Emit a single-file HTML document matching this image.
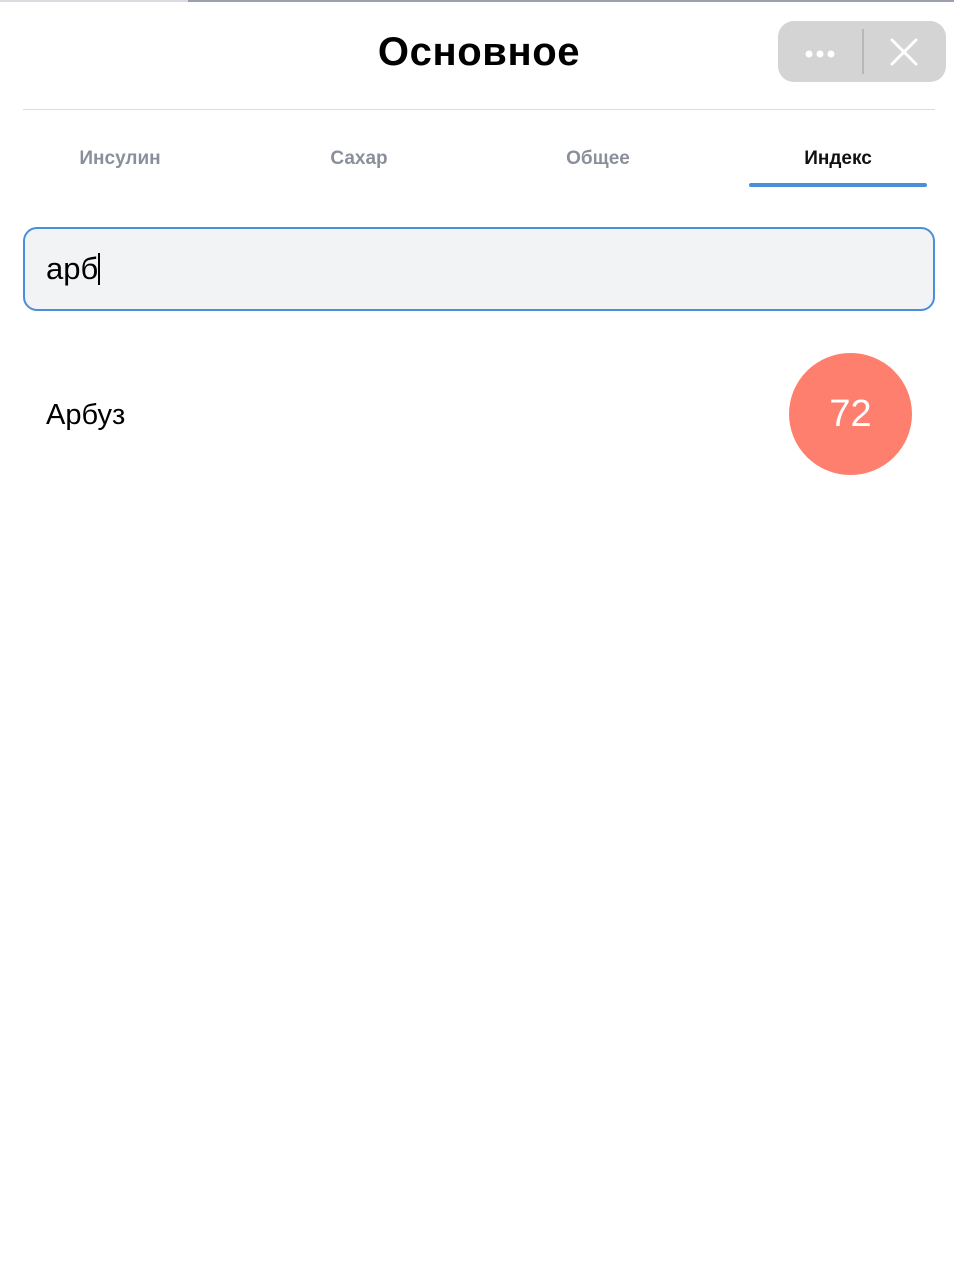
<!DOCTYPE html>
<html><head><meta charset="utf-8"><style>
body{margin:0;width:954px;height:1280px;background:#fff;font-family:"Liberation Sans",sans-serif;position:relative;overflow:hidden}
.a{position:absolute}
</style></head><body>
<div class="a" style="left:0;top:0;width:188px;height:2px;background:#d8dbe0"></div>
<div class="a" style="left:188px;top:0;width:766px;height:2px;background:#9aa0ae"></div>
<div class="a" style="left:0;top:29px;width:958px;text-align:center;font-size:40px;font-weight:bold;color:#000;line-height:46px;letter-spacing:0.6px">Основное</div>
<div class="a" style="left:778px;top:21px;width:168px;height:61px;border-radius:16px;background:#d4d4d4"></div>
<div class="a" style="left:862px;top:29px;width:2px;height:45px;background:#b8b8b8"></div>
<div class="a" style="left:804px;top:46px;width:32px;height:10px">
<svg width="32" height="10"><circle cx="5" cy="5" r="3.5" fill="#fff"/><circle cx="16" cy="5" r="3.5" fill="#fff"/><circle cx="27" cy="5" r="3.5" fill="#fff"/></svg></div>
<svg class="a" style="left:890px;top:38px" width="28" height="28"><path d="M2 2L26 26M26 2L2 26" stroke="#fff" stroke-width="3" stroke-linecap="round"/></svg>
<div class="a" style="left:23px;top:109px;width:912px;height:1px;background:#dcdcdc"></div>
<div class="a" style="top:148px;left:0;width:240px;text-align:center;font-size:19px;font-weight:bold;color:#8a909b">Инсулин</div>
<div class="a" style="top:148px;left:239px;width:240px;text-align:center;font-size:19px;font-weight:bold;color:#8a909b">Сахар</div>
<div class="a" style="top:148px;left:478px;width:240px;text-align:center;font-size:19px;font-weight:bold;color:#8a909b">Общее</div>
<div class="a" style="top:148px;left:718px;width:240px;text-align:center;font-size:19px;font-weight:bold;color:#111">Индекс</div>
<div class="a" style="left:749px;top:183px;width:178px;height:4px;border-radius:2px;background:#4a8fd9"></div>
<div class="a" style="left:23px;top:227px;width:908px;height:80px;border:2px solid #4a8fd9;border-radius:14px;background:#f2f3f5"></div>
<div class="a" style="left:46px;top:251px;font-size:31px;color:#000">арб<span style="display:inline-block;width:2px;height:32px;background:#000;vertical-align:-6px"></span></div>
<div class="a" style="left:46px;top:399px;font-size:29px;color:#000">Арбуз</div>
<div class="a" style="left:789px;top:353px;width:123px;height:122px;border-radius:50%;background:#fe7f6e;color:#fff;font-size:38px;text-align:center;line-height:122px">72</div>
</body></html>
